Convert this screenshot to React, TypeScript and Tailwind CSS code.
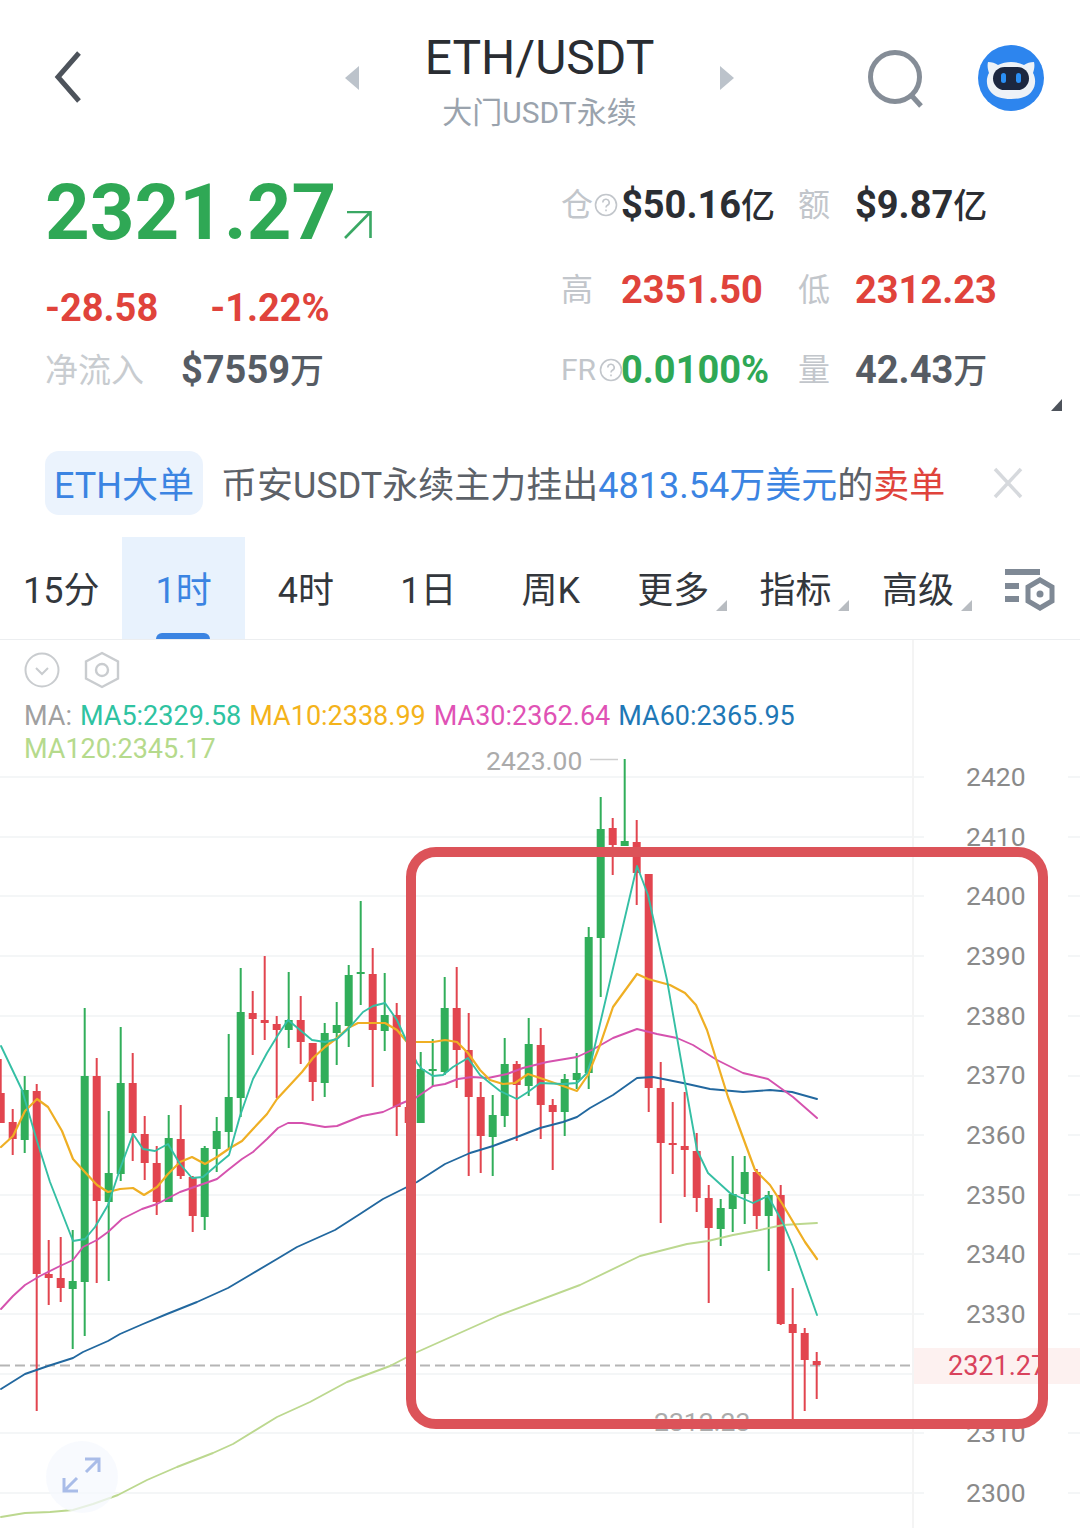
import React from "react";

type Candle = ["g" | "r", number, number, number, number];

// [colour, high, body top, body bottom, low] in page pixels, one per 12px
const candles: Candle[] = [
  ["r", 1059, 1093, 1123, 1123], ["r", 1109, 1122, 1139, 1155], ["g", 1076, 1090, 1140, 1153], ["r", 1084, 1091, 1274, 1411],
  ["r", 1240, 1274, 1278, 1305], ["r", 1237, 1278, 1288, 1302], ["g", 1230, 1281, 1289, 1349], ["g", 1008, 1076, 1282, 1336],
  ["r", 1058, 1076, 1201, 1283], ["g", 1111, 1173, 1202, 1281], ["g", 1027, 1083, 1174, 1181], ["r", 1053, 1083, 1133, 1161],
  ["r", 1116, 1134, 1163, 1180], ["r", 1146, 1163, 1202, 1215], ["g", 1115, 1138, 1202, 1202], ["r", 1105, 1139, 1176, 1179],
  ["r", 1176, 1177, 1216, 1232], ["g", 1146, 1148, 1217, 1230], ["g", 1117, 1131, 1149, 1172], ["g", 1034, 1097, 1132, 1148],
  ["g", 968, 1012, 1098, 1117], ["r", 991, 1013, 1019, 1055], ["r", 956, 1020, 1023, 1040], ["r", 1016, 1024, 1030, 1098],
  ["g", 972, 1020, 1030, 1048], ["r", 996, 1020, 1042, 1064], ["r", 1043, 1043, 1082, 1101], ["g", 1023, 1033, 1083, 1097],
  ["g", 1002, 1025, 1033, 1065], ["g", 965, 975, 1026, 1047], ["g", 901, 972, 974, 1005], ["r", 948, 974, 1030, 1087],
  ["g", 973, 1015, 1031, 1051], ["r", 1003, 1015, 1107, 1136], ["r", 1107, 1107, 1123, 1123], ["g", 1052, 1069, 1123, 1123],
  ["g", 1039, 1069, 1071, 1086], ["g", 977, 1008, 1072, 1075], ["r", 967, 1008, 1050, 1088], ["r", 1013, 1050, 1097, 1176],
  ["r", 1082, 1097, 1136, 1173], ["g", 1095, 1115, 1137, 1176], ["g", 1038, 1064, 1116, 1127], ["r", 1061, 1064, 1085, 1141],
  ["g", 1018, 1044, 1086, 1096], ["r", 1028, 1045, 1105, 1139], ["r", 1099, 1105, 1112, 1170], ["g", 1074, 1079, 1112, 1136],
  ["g", 1053, 1073, 1080, 1089], ["g", 927, 937, 1073, 1089], ["g", 797, 829, 938, 997], ["r", 818, 828, 845, 875],
  ["g", 759, 841, 846, 846], ["r", 820, 842, 873, 905], ["r", 874, 874, 1088, 1112], ["r", 1062, 1088, 1143, 1223],
  ["r", 1102, 1143, 1145, 1174], ["r", 1092, 1146, 1150, 1197], ["r", 1133, 1151, 1198, 1212], ["r", 1185, 1198, 1228, 1303],
  ["g", 1199, 1208, 1229, 1246], ["g", 1156, 1194, 1209, 1232], ["g", 1156, 1172, 1194, 1224], ["r", 1169, 1172, 1216, 1229],
  ["g", 1191, 1195, 1216, 1271], ["r", 1185, 1195, 1324, 1325], ["r", 1288, 1324, 1333, 1420], ["r", 1328, 1333, 1360, 1411],
  ["r", 1352, 1361, 1365, 1399],
];

const ma5 =
  "1,1046 22,1090 37,1141 50,1182 73,1241 85,1239 95,1227 108,1205 120,1169 133,1134 143,1149 155,1151 168,1144 180,1164 192,1178 203,1177 217,1165 229,1155 240,1116 253,1079 267,1053 278,1035 288,1020 300,1030 312,1040 325,1042 337,1039 350,1027 363,1012 373,1006 385,1003 397,1020 407,1042 417,1063 422,1069 433,1076 443,1075 453,1067 468,1058 480,1075 500,1091 517,1099 528,1092 540,1083 563,1084 577,1083 587,1073 592,1058 637,866 648,895 667,980 685,1083 697,1150 708,1173 730,1193 753,1203 768,1196 783,1223 793,1247 817,1315";
const ma10 =
  "1,1147 13,1136 25,1111 37,1099 48,1107 62,1131 73,1159 83,1170 97,1185 108,1192 120,1189 133,1188 144,1195 157,1187 168,1174 180,1162 192,1157 205,1164 217,1157 230,1148 242,1141 253,1129 267,1114 277,1099 290,1085 302,1072 313,1058 325,1047 337,1038 348,1028 358,1023 372,1023 385,1023 397,1030 407,1042 417,1042 433,1042 445,1040 457,1042 468,1053 480,1070 490,1080 503,1084 515,1083 528,1074 543,1079 563,1086 577,1091 588,1075 600,1045 613,1007 637,974 648,979 670,985 685,993 696,1005 707,1030 728,1097 755,1170 770,1185 783,1205 805,1242 817,1259";
const ma30 =
  "1,1309 13,1296 25,1285 40,1276 60,1266 73,1260 83,1247 97,1240 108,1232 122,1219 142,1209 157,1204 180,1192 203,1184 217,1179 228,1170 242,1159 253,1152 267,1139 278,1128 288,1123 302,1123 325,1127 337,1126 362,1116 383,1112 400,1104 417,1097 433,1086 445,1084 458,1079 472,1077 488,1078 507,1074 523,1068 547,1062 577,1057 592,1050 613,1038 637,1029 657,1034 677,1038 693,1045 717,1060 743,1073 768,1079 793,1097 817,1118";
const ma60 =
  "1,1389 25,1374 48,1366 73,1358 83,1352 108,1341 120,1334 143,1324 167,1314 197,1302 228,1288 250,1275 277,1259 297,1247 335,1230 360,1214 383,1199 407,1187 417,1182 445,1164 470,1153 493,1146 517,1137 540,1128 563,1122 577,1117 590,1108 613,1095 637,1078 653,1077 683,1083 710,1089 743,1092 770,1090 792,1092 817,1099";
const ma120 =
  "1,1517 25,1513 50,1512 73,1510 93,1504 118,1495 147,1480 177,1467 213,1453 233,1444 277,1417 310,1402 347,1382 390,1366 415,1353 500,1315 580,1285 640,1256 687,1244 708,1241 733,1235 760,1230 783,1225 817,1223";

const gridYs = [777, 837, 896, 956, 1016, 1076, 1135, 1195, 1254, 1314, 1374, 1433, 1493];
const axisLabels = ["2420", "2410", "2400", "2390", "2380", "2370", "2360", "2350", "2340", "2330", "", "2310", "2300"];

const tabs = ["15分", "1时", "4时", "1日", "周K", "更多", "指标", "高级"];

function Header() {
  return (
    <header className="flex h-[160px] items-start">
      <div className="w-[344px] pl-[54px] pt-[50px]">
        <svg width="28" height="54" viewBox="0 0 28 54" fill="none">
          <path d="M25 3 4 27l21 24" stroke="#4d535b" strokeWidth="5" />
        </svg>
      </div>
      <svg className="mt-[66px] w-[16px]" width="16" height="24" viewBox="0 0 16 24">
        <path d="M15 0v24L1 12z" fill="#bcc3cb" />
      </svg>
      <div className="w-[359px] pt-[29px] text-center">
        <div className="text-[48px] leading-[58px] text-[#2a2d32]">ETH/USDT</div>
        <div className="mt-[7px] text-[30px] leading-[38px] text-[#9aa3ad]">大门USDT永续</div>
      </div>
      <svg className="mt-[66px] w-[16px]" width="16" height="24" viewBox="0 0 16 24">
        <path d="M1 0v24l14-12z" fill="#bcc3cb" />
      </svg>
      <svg className="ml-[133px] mt-[50px]" width="58" height="58" viewBox="0 0 58 58" fill="none">
        <circle cx="27" cy="27" r="24.5" stroke="#858d97" strokeWidth="5" />
        <path d="m44 46 9 10" stroke="#858d97" strokeWidth="5" />
      </svg>
      <svg className="ml-[51px] mt-[44px]" width="68" height="68" viewBox="0 0 68 68">
        <circle cx="34" cy="34" r="33" fill="#2d85ee" />
        <path d="M11 18c4 0 7 1 10 3 8-4 18-4 26 0 3-2 6-3 10-3 1 4 0 8-1 11 3 5 3 13-1 18-4 6-12 8-21 8s-17-2-21-8c-4-5-4-13-1-18-1-3-2-7-1-11z" fill="#eef2f7" />
        <rect x="16" y="23" width="36" height="23" rx="11.5" fill="#1c2740" />
        <rect x="24" y="29" width="5" height="10" rx="2.5" fill="#2b8ff5" />
        <rect x="39" y="29" width="5" height="10" rx="2.5" fill="#2b8ff5" />
      </svg>
    </header>
  );
}

function HelpDot({ className }: { className: string }) {
  return (
    <svg className={className} width="24" height="24" viewBox="0 0 24 24" fill="none" stroke="#c2c6cb" strokeWidth="1.6">
      <circle cx="12" cy="12" r="10.5" />
      <path d="M8.8 9.4a3.2 3.2 0 1 1 4.6 2.9c-1 .6-1.4 1.2-1.4 2.3M12 16.6v1.6" />
    </svg>
  );
}

// the 亿 / 万 unit sits a little smaller and lighter than the digits
function Amount({ value, unit }: { value: string; unit?: string }) {
  return (
    <>
      {value}
      {unit ? <span className="text-[34px] font-medium">{unit}</span> : null}
    </>
  );
}

function StatRow({ label, value, color, value2Label, value2, color2, help }: {
  label: string;
  value: React.ReactNode;
  color: string;
  value2Label: string;
  value2: React.ReactNode;
  color2: string;
  help?: string;
}) {
  return (
    <div className="grid h-[40px] grid-cols-[60px_177px_57px_1fr] grid-rows-[40px] items-center">
      <div className="flex items-center text-[32px] leading-[40px] text-[#c2c6cb]">
        <span className={help === "fr" ? "text-[30px]" : ""}>{label}</span>
        {help ? <HelpDot className={help === "fr" ? "ml-[3px] shrink-0" : "ml-[1px] shrink-0"} /> : null}
      </div>
      <div className={`text-[38px] font-bold leading-[40px] ${color}`}>{value}</div>
      <div className="text-[32px] leading-[40px] text-[#c2c6cb]">{value2Label}</div>
      <div className={`text-[38px] font-bold leading-[40px] ${color2}`}>{value2}</div>
    </div>
  );
}

function Stats() {
  return (
    <section className="relative flex h-[291px]">
      <div className="w-[516px] pl-[45px] pt-[13px]">
        <div className="flex h-[80px] items-center">
          <span className="text-[78px] font-bold leading-none text-[#2fa855]">2321.27</span>
          <svg className="ml-[7px] mt-[26px]" width="29" height="30" viewBox="0 0 29 30" fill="none" stroke="#3aa864" strokeWidth="2.6">
            <path d="M4 1h23.500v26M27.500 1 2 27" />
          </svg>
        </div>
        <div className="mt-[37px] flex h-[36px] items-center gap-[52px] text-[38px] font-bold text-[#e0433b]">
          <span>-28.58</span>
          <span>-1.22%</span>
        </div>
        <div className="mt-[24px] flex h-[40px] items-center">
          <span className="w-[136px] pt-[2px] text-[33px] text-[#c8ccd0]">净流入</span>
          <span className="text-[38px] font-bold text-[#565c64]">
            <Amount value="$7559" unit="万" />
          </span>
        </div>
      </div>
      <div className="flex-1 pl-[45px] pt-[25px]">
        <StatRow label="仓" help="oi" value={<Amount value="$50.16" unit="亿" />} color="text-[#2b2e33]" value2Label="额" value2={<Amount value="$9.87" unit="亿" />} color2="text-[#2b2e33]" />
        <div className="h-[45px]" />
        <StatRow label="高" value="2351.50" color="text-[#e0433b]" value2Label="低" value2="2312.23" color2="text-[#e0433b]" />
        <div className="h-[40px]" />
        <StatRow label="FR" help="fr" value="0.0100%" color="text-[#2fa855]" value2Label="量" value2={<Amount value="42.43" unit="万" />} color2="text-[#565c64]" />
      </div>
      <div className="absolute left-[1051px] top-[239px] h-0 w-0 border-b-[12px] border-l-[11px] border-b-[#4d535b] border-l-transparent" />
    </section>
  );
}

function Notice() {
  return (
    <div className="flex h-[64px] items-center pl-[45px]">
      <div className="flex h-full w-[158px] items-center justify-center rounded-[14px] bg-[#ebf3fd] pt-[6px] text-[36px] text-[#3b84e2]">ETH大单</div>
      <div className="ml-[18px] w-[740px] whitespace-nowrap pt-[6px] text-[36px] text-[#5c6168]">
        币安USDT永续主力挂出<span className="text-[#3b84e2]">4813.54万美元</span>的<span className="text-[#e0433b]">卖单</span>
      </div>
      <svg className="ml-[32px]" width="30" height="32" viewBox="0 0 30 32" fill="none" stroke="#d6d9dd" strokeWidth="3.5">
        <path d="m2 2 26 28M28 2 2 30" />
      </svg>
    </div>
  );
}

function Tabs() {
  return (
    <nav className="mt-[22px] flex h-[103px] border-b border-[#eceef0]">
      {tabs.map((tab, i) => {
        const active = i === 1;
        return (
          <div
            key={tab}
            className={
              active
                ? "relative flex w-[122.4px] items-center justify-center bg-[#e8f2fd] pt-[6px] text-[36px] text-[#3b84e2]"
                : "relative flex w-[122.4px] items-center justify-center pt-[6px] text-[36px] text-[#33373c]"
            }
          >
            {tab}
            {active ? <span className="absolute bottom-0 left-[34px] h-[6px] w-[54px] rounded-t-[6px] bg-[#3b84e2]" /> : null}
            {i > 4 ? (
              <span className="absolute left-[104px] top-[63px] h-0 w-0 border-b-[11px] border-l-[11px] border-b-[#b8bcc1] border-l-transparent" />
            ) : null}
          </div>
        );
      })}
      <svg className="ml-[26px] mt-[31px]" width="52" height="44" viewBox="0 0 52 44" fill="none">
        <path d="M0 1h35v6H0zM0 15h14v6H0zM0 28h14v6H0z" fill="#7f8995" />
        <path d="m35 12 12 7v14l-12 7-12-7V19z" stroke="#7f8995" strokeWidth="5" />
        <circle cx="35" cy="26" r="3.500" fill="#7f8995" />
      </svg>
    </nav>
  );
}

function ChartCanvas() {
  return (
    <svg className="absolute inset-0" width="1080" height="888" viewBox="0 640 1080 888" fill="none">
      {gridYs.map((y) => (
        <g key={y} stroke="#f1f3f5" strokeWidth="1.5">
          <path d={`M0 ${y}H924`} />
          <path d={`M1068 ${y}H1080`} />
        </g>
      ))}
      <path d="M0 1365.5H910" stroke="#b5b5b5" strokeWidth="2" strokeDasharray="10 5" />
      {candles.map(([c, high, top, bottom, low], i) => {
        const x = 0.7 + i * 12;
        const fill = c === "g" ? "#31ae5a" : "#e2454f";
        return (
          <g key={i}>
            <rect x={x - 1} y={high} width="2" height={low - high} fill={fill} />
            <rect x={x - 4} y={top} width="8" height={Math.max(bottom - top, 2)} fill={fill} />
          </g>
        );
      })}
      <g strokeWidth="1.9" strokeLinejoin="round" strokeLinecap="round">
        <polyline points={ma120} stroke="#bcd88f" />
        <polyline points={ma60} stroke="#22689f" />
        <polyline points={ma30} stroke="#d552ae" />
        <polyline points={ma10} stroke="#efaf24" strokeWidth="2.2" />
        <polyline points={ma5} stroke="#35bfa4" />
      </g>
      <path d="M590 759.5h28" stroke="#cfcfcf" strokeWidth="1.5" />
      <circle cx="82" cy="1477" r="36" fill="#f6f8fd" fillOpacity="0.75" />
      <path d="M85 1459h14v13M99 1459l-13 13M64 1478v13h14M64 1491l13-13" stroke="#a9bce8" strokeWidth="3" />
    </svg>
  );
}

function Chart() {
  return (
    <div className="relative h-[888px] overflow-hidden">
      <ChartCanvas />

      <div className="absolute left-[24px] top-[11px] flex items-center gap-[24px]">
        <svg width="36" height="36" viewBox="0 0 36 36" fill="none" stroke="#c9cccf" strokeWidth="2">
          <circle cx="18" cy="18" r="16.5" />
          <path d="m12 16 6 6 6-6" />
        </svg>
        <svg width="36" height="38" viewBox="0 0 36 38" fill="none" stroke="#c9cccf" strokeWidth="2.4">
          <path d="m18 2 16 8.500v17L18 36 2 27.500v-17z" />
          <circle cx="18" cy="19" r="6" />
        </svg>
      </div>
      <div className="absolute left-[24px] top-[60px] flex w-[800px] flex-wrap gap-x-[8px] text-[27px] leading-[33px]">
        <span className="text-[#a0a0a0]">MA:</span>
        <span className="text-[#2fc3a1]">MA5:2329.58</span>
        <span className="text-[#f4b31a]">MA10:2338.99</span>
        <span className="text-[#e052b5]">MA30:2362.64</span>
        <span className="text-[#1f78b6]">MA60:2365.95</span>
        <span className="text-[#b5da8c]">MA120:2345.17</span>
      </div>
      <span className="absolute left-[486px] top-[105px] text-[26.5px] leading-[32px] text-[#ababab]">2423.00</span>
      <span className="absolute left-[654px] top-[766px] text-[26.5px] leading-[32px] text-[#ababab]">2312.23</span>

      <div className="absolute left-[912px] top-[708px] h-[36px] w-[168px] bg-[#fdf1f0]" />
      <div className="relative ml-[912px] h-full border-l-2 border-[#f4f4f4] pl-[52px] pt-[107px] text-[26.5px] text-[#8a8a8a]">
        {axisLabels.map((label, i) => (
          <div key={i} className="flex h-[59.67px] items-center">
            {label}
          </div>
        ))}
      </div>
      <span className="absolute left-[948px] top-[709px] text-[27px] leading-[34px] text-[#d9425c]">2321.27</span>

      <div className="absolute left-[406px] top-[207px] h-[582px] w-[642px] rounded-[30px] border-[10px] border-[#dc5359]" />
    </div>
  );
}

export default function App() {
  return (
    <div className="h-[1528px] w-[1080px] overflow-hidden bg-white font-['Roboto','Noto_Sans_CJK_SC',sans-serif]">
      <Header />
      <Stats />
      <Notice />
      <Tabs />
      <Chart />
    </div>
  );
}
